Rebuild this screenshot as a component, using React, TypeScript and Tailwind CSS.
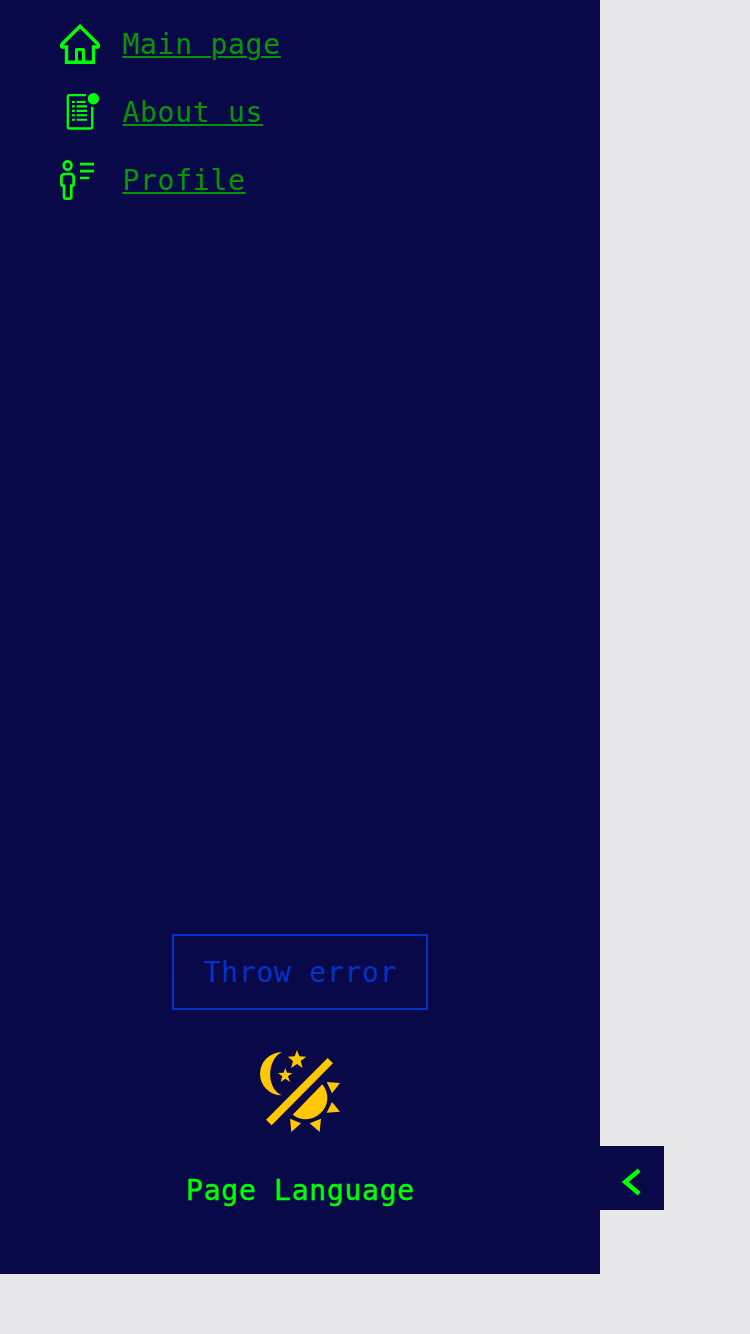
import type { ReactNode } from "react";

function HomeIcon() {
  return (
    <svg width="40" height="40" viewBox="0 0 40 40" fill="none" stroke="#00ff00" strokeWidth="3.4">
      <path d="M20 2.3 L2.2 20 Q.9 21.5 2.2 23 H6.5 V38.2 H33.5 V23 H37.8 Q39.1 21.5 37.8 20 Z" strokeLinejoin="miter" />
      <path d="M16.5 38 V25.6 H23.5 V38" strokeWidth="3" strokeLinejoin="round" />
    </svg>
  );
}

function AboutIcon() {
  return (
    <svg width="40" height="40" viewBox="0 0 40 40" fill="none" stroke="#00ff00" strokeWidth="2.3">
      <path d="M26 3.1 H9 Q7.8 3.1 7.8 4.4 V35.3 Q7.8 36.5 9 36.5 H31 Q32.2 36.5 32.2 35.3 V14.8" />
      <circle cx="33.4" cy="6.7" r="5.7" fill="#00ff00" stroke="none" />
      <path d="M12 10H14.8M12 14.4H14.8M12 18.9H14.8M12 23.3H14.8M12 27.8H14.8M16.6 10H25.8M16.6 14.4H27M16.6 18.9H27M16.6 23.3H27M16.6 27.8H27" strokeWidth="2.1" />
    </svg>
  );
}

function ProfileIcon() {
  return (
    <svg width="40" height="40" viewBox="0 0 40 40" fill="none" stroke="#00ff00" strokeWidth="2.7">
      <ellipse cx="7.6" cy="5.5" rx="3.8" ry="4.2" />
      <path d="M4.1 25.7 H3.3 Q1.4 25.7 1.4 23.7 V17.5 Q1.4 14 4.9 14 H10.2 Q13.7 14 13.7 17.5 V23.7 Q13.7 25.7 11.8 25.7 H11.3 V36.9 Q11.3 38.6 9.6 38.6 H5.8 Q4.1 38.6 4.1 36.9 V24.4" />
      <path d="M20 4.1H34M20 11.1H34M20 18H29" strokeWidth="2.7" />
    </svg>
  );
}

function ThemeIcon() {
  return (
    <svg width="100" height="100" viewBox="0 0 300 300" fill="#ffc800">
      <path d="M96 36 A66 66 0 0 0 30 101 A65 65 0 0 0 95 166 C49 145 49 60 96 36 Z" />
      <path d="M141 30 L148 49 L169 50 L152 63 L158 84 L141 72 L123 84 L129 63 L113 50 L134 49 Z" />
      <path d="M106 84 L111 98 L127 99 L114 109 L120 126 L106 116 L92 126 L97 109 L84 99 L101 98 Z" />
      <path d="M233 54 L249 70 L65 256 L48 239 Z" />
      <path d="M217 133 C240 161 236 199 211 220 C188 243 153 243 128 224 Z" />
      <path d="M230 126 L270 129 L246 160 Z M246 186 L270 215 L230 218 Z M120 236 L153 250 L124 276 Z M213 236 L209 276 L179 250 Z" />
    </svg>
  );
}

function NavItem({ icon, children }: { icon: ReactNode; children: ReactNode }) {
  return (
    <li className="flex h-10 items-center gap-[22.4px]">
      {icon}
      <a href="#" className="pt-[2px] text-[#049604] underline decoration-2 underline-offset-[2px]">
        {children}
      </a>
    </li>
  );
}

export default function App() {
  return (
    <div className="flex h-[1334px] w-[750px] items-start bg-[#e8e8ea] font-['DejaVu_Sans_Mono',monospace] text-[28px] leading-10 tracking-[0.743px]">
      <aside className="flex h-[1274px] w-[600px] flex-col items-center bg-[#090848] pt-6">
        <ul className="flex w-full flex-col gap-7 pl-[60px]">
          <NavItem icon={<HomeIcon />}>Main page</NavItem>
          <NavItem icon={<AboutIcon />}>About us</NavItem>
          <NavItem icon={<ProfileIcon />}>Profile</NavItem>
        </ul>
        <button className="mt-auto h-[76px] w-64 border-2 border-[#0232c8] pt-[2px] pl-[1px] text-[#0232c8]">Throw error</button>
        <button aria-label="Theme" className="mt-[30px]">
          <ThemeIcon />
        </button>
        <button className="mt-[31px] mb-[63px] h-10 pl-[1px] text-[#00ff00] [-webkit-text-stroke:0.4px_#00ff00]">Page Language</button>
      </aside>
      <button aria-label="Collapse" className="mt-[1146px] flex h-16 w-16 bg-[#090848]">
        <svg width="64" height="64" viewBox="0 0 64 64" fill="none" stroke="#00ff00" strokeWidth="4.6">
          <path d="M39.2 24.3 L25.3 36 L39.2 47.7" />
        </svg>
      </button>
    </div>
  );
}
